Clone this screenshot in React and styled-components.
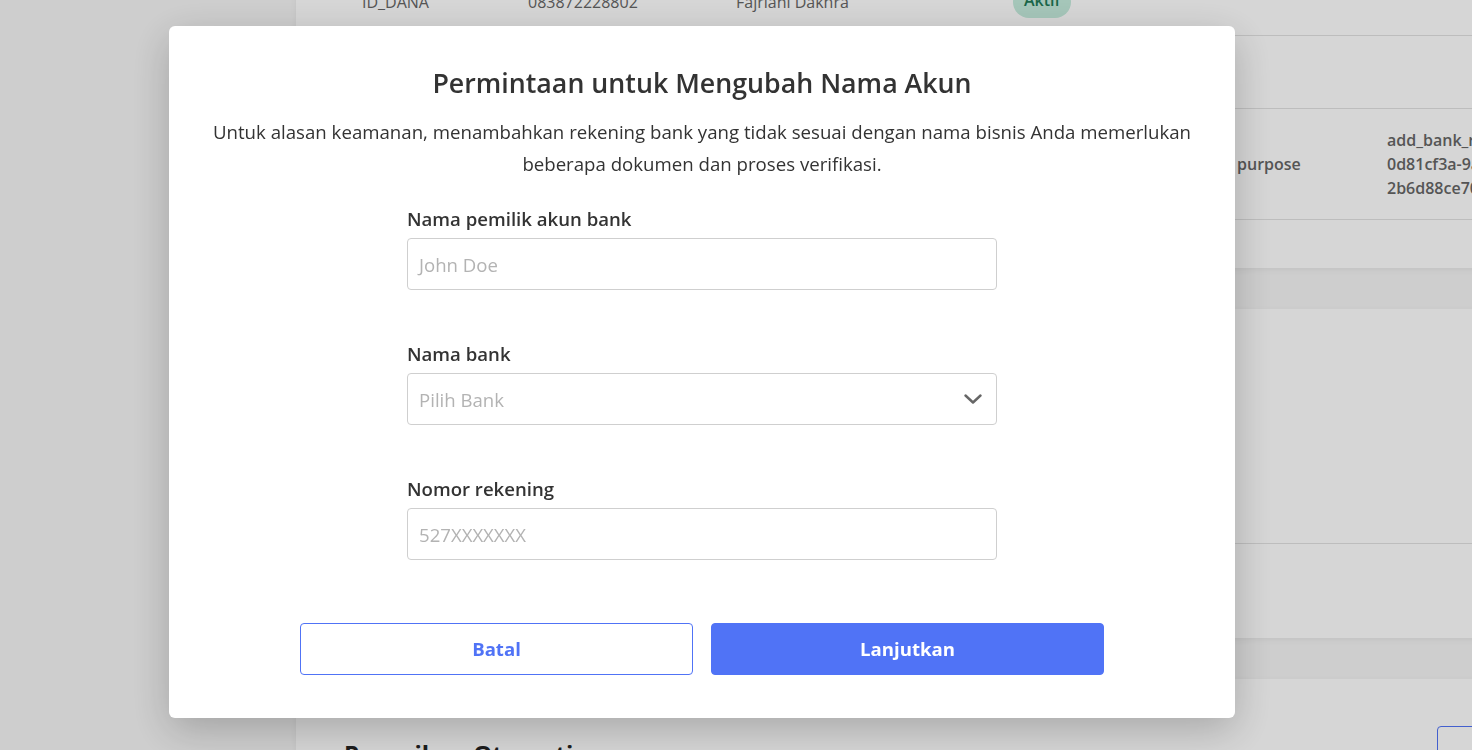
import React from "react";
import styled, { createGlobalStyle } from "styled-components";

const GlobalStyle = createGlobalStyle`
  * { box-sizing: border-box; }
  html, body { margin: 0; padding: 0; }
  body {
    width: 1472px;
    height: 750px;
    overflow: hidden;
    background: #f6f6f6;
    font-family: "Open Sans", "Noto Sans", sans-serif;
    color: #333;
  }
`;

const Page = styled.div`
  display: flex;
  width: 1472px;
  height: 750px;
  overflow: hidden;
  padding-left: 296px;
`;

const Main = styled.div`
  display: flex;
  flex-direction: column;
  gap: 41px;
  width: 1300px;
  flex-shrink: 0;
`;

const Card = styled.div`
  background: #fff;
  border-radius: 4px;
  box-shadow: 0 2px 6px rgba(0, 0, 0, 0.06);
  display: flex;
  flex-direction: column;
  height: ${(p) => p.$h}px;
  margin-top: ${(p) => p.$mt || 0}px;
  flex-shrink: 0;
`;

const Row = styled.div`
  display: grid;
  grid-template-columns: ${(p) => p.$cols};
  align-items: center;
  height: ${(p) => p.$h}px;
  padding-left: 66px;
  border-bottom: ${(p) => (p.$line ? "1px solid #e2e2e2" : "none")};
  font-size: 16px;
  color: #666;
  white-space: nowrap;
  overflow: hidden;
`;

const Cell = styled.div`
  font-weight: ${(p) => (p.$bold ? 600 : 400)};
  line-height: 24px;
`;

const Pill = styled.span`
  display: inline-block;
  background: #c5ecdd;
  color: #1f7a57;
  border-radius: 20px;
  padding: 2px 11px 6px;
  font-size: 16px;
  font-weight: 600;
`;

const Spacer = styled.div`
  flex: 1;
  border-bottom: ${(p) => (p.$line ? "1px solid #e2e2e2" : "none")};
  max-height: ${(p) => (p.$max ? `${p.$max}px` : "none")};
`;

const CardHead = styled.div`
  display: flex;
  justify-content: space-between;
  align-items: flex-start;
  padding: 47px 39px 0 48px;
`;

const CardTitle = styled.h2`
  margin: 11px 0 0;
  font-size: 24px;
  font-weight: 700;
  color: #222;
`;

const GhostBtn = styled.div`
  width: 120px;
  height: 44px;
  border: 1px solid #5073f6;
  border-radius: 4px;
  margin-left: auto;
`;

const Overlay = styled.div`
  position: fixed;
  inset: 0;
  background: rgba(0, 0, 0, 0.16);
  display: flex;
  align-items: flex-start;
  padding: 26px 0 0 169px;
`;

const Modal = styled.div`
  width: 1066px;
  height: 692px;
  background: #fff;
  border-radius: 6px;
  box-shadow: 0 12px 40px rgba(0, 0, 0, 0.22);
  display: flex;
  flex-direction: column;
  align-items: center;
  padding: 40px 0 0;
`;

const Title = styled.h1`
  margin: 0;
  font-size: 26.75px;
  line-height: 34px;
  font-weight: 600;
  color: #333;
`;

const Desc = styled.p`
  margin: 16px 0 0;
  font-size: 18.65px;
  line-height: 32px;
  text-align: center;
  color: #333;
  width: 1010px;
`;

const Form = styled.div`
  width: 590px;
  margin-top: 27px;
  display: flex;
  flex-direction: column;
  gap: 52px;
`;

const Field = styled.div`
  display: flex;
  flex-direction: column;
  gap: 7px;
`;

const Label = styled.label`
  font-size: 18.6px;
  line-height: 24px;
  font-weight: 600;
  color: #333;
`;

const InputBox = styled.div`
  height: 52px;
  border: 1px solid #cfcfcf;
  border-radius: 4px;
  display: flex;
  align-items: center;
  justify-content: space-between;
  padding: 0 14px 0 11px;
  font-size: 18.6px;
  color: #b3b3b3;
`;

const Actions = styled.div`
  display: flex;
  gap: 18px;
  margin-top: 63px;
`;

const Button = styled.button`
  width: 393px;
  height: 52px;
  border-radius: 4px;
  border: 1px solid #5073f6;
  background: ${(p) => (p.$primary ? "#5073f6" : "#fff")};
  color: ${(p) => (p.$primary ? "#fff" : "#5073f6")};
  font-family: "Open Sans", "Noto Sans", sans-serif;
  font-size: 18.6px;
  font-weight: 700;
  padding: 0 0 2px;
  cursor: pointer;
`;

const Chevron = () => (
  <svg width="18" height="10" viewBox="0 0 18 10" fill="none">
    <polyline points="1.5,1.5 9,8.5 16.5,1.5" stroke="#666" strokeWidth="2.4" strokeLinecap="round" strokeLinejoin="round" />
  </svg>
);

export default function App() {
  return (
    <>
      <GlobalStyle />
      <Page>
        <Main>
          <Card $h={300} $mt={-32}>
            <Row $h={68} $line $cols="166px 208px 277px 100px">
              <Cell>ID_DANA</Cell>
              <Cell>083872228802</Cell>
              <Cell>Fajriani Dakhra</Cell>
              <Cell>
                <Pill>Aktif</Pill>
              </Cell>
            </Row>
            <Row $h={73} $line $cols="1fr" />
            <Row $h={111} $line $cols="875px 150px 200px">
              <Cell />
              <Cell $bold>purpose</Cell>
              <Cell $bold>
                add_bank_request
                <br />
                0d81cf3a-9a1e-4c
                <br />
                2b6d88ce70a1
              </Cell>
            </Row>
          </Card>
          <Card $h={329}>
            <Spacer $line $max={235} />
          </Card>
          <Card $h={200}>
            <CardHead>
              <CardTitle>Penarikan Otomatis</CardTitle>
              <GhostBtn />
            </CardHead>
          </Card>
        </Main>
      </Page>
      <Overlay>
        <Modal>
          <Title>Permintaan untuk Mengubah Nama Akun</Title>
          <Desc>
            Untuk alasan keamanan, menambahkan rekening bank yang tidak sesuai dengan nama bisnis Anda memerlukan
            beberapa dokumen dan proses verifikasi.
          </Desc>
          <Form>
            <Field>
              <Label>Nama pemilik akun bank</Label>
              <InputBox>John Doe</InputBox>
            </Field>
            <Field>
              <Label>Nama bank</Label>
              <InputBox>
                Pilih Bank
                <Chevron />
              </InputBox>
            </Field>
            <Field>
              <Label>Nomor rekening</Label>
              <InputBox>527XXXXXXX</InputBox>
            </Field>
          </Form>
          <Actions>
            <Button>Batal</Button>
            <Button $primary>Lanjutkan</Button>
          </Actions>
        </Modal>
      </Overlay>
    </>
  );
}
